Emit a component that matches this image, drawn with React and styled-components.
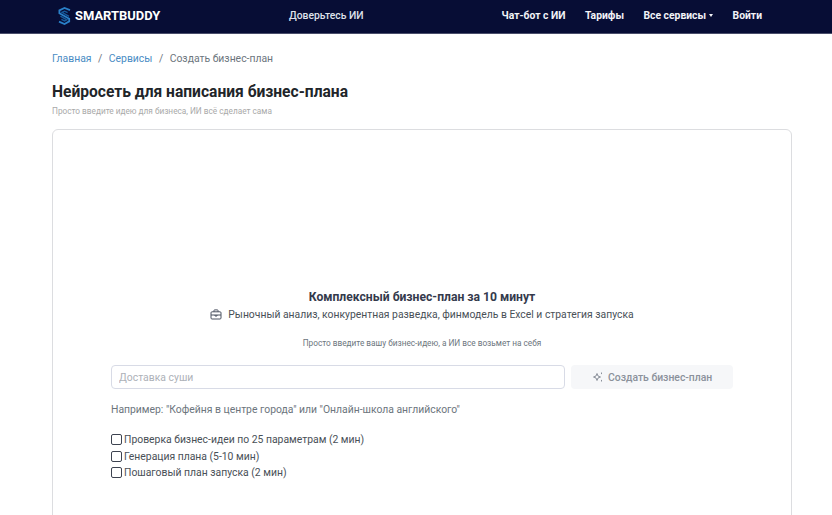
import React from "react";
import styled, { createGlobalStyle } from "styled-components";

const Global = createGlobalStyle`
  html, body {
    margin: 0;
    padding: 0;
    height: 515px;
    overflow: hidden;
    background: #fff;
    font-family: Roboto, "Liberation Sans", sans-serif;
  }
  * { box-sizing: border-box; }
`;

const Nav = styled.nav`
  height: 34px;
  background: #070d35;
  border-bottom: 1px solid #4a4e6b;
  display: flex;
  align-items: center;
  padding: 0 70px 2px 57px;
`;

const Brand = styled.div`
  display: flex;
  align-items: center;
  gap: 3px;
  width: 232px;
  color: #fff;
  font-size: 12.95px;
  font-weight: 700;
`;

const Slogan = styled.div`
  color: #dfe1ea;
  font-size: 10.35px;
  font-weight: 500;
`;

const Menu = styled.div`
  margin-left: auto;
  display: flex;
  align-items: center;
  gap: 19.5px;
`;

const MenuLink = styled.a`
  color: #f2f3f7;
  font-size: 10.35px;
  font-weight: 700;
  display: flex;
  align-items: center;
  gap: 3px;
`;

const Caret = styled.span`
  width: 0;
  height: 0;
  border-left: 2.5px solid transparent;
  border-right: 2.5px solid transparent;
  border-top: 3px solid #f2f3f7;
`;

const Main = styled.main`
  padding: 18px 40px 0 52px;
`;

const Crumbs = styled.div`
  display: flex;
  gap: 6.5px;
  font-size: 10.4px;
  line-height: 14px;
  color: #6c757d;
`;

const Crumb = styled.a`
  color: ${(p) => (p.$active ? "#6c757d" : "#4a8cc4")};
`;

const Title = styled.h1`
  margin: 16px 0 0;
  font-size: 15.6px;
  line-height: 20px;
  font-weight: 700;
  color: #212529;
`;

const Sub = styled.p`
  margin: 4px 0 0;
  font-size: 8.25px;
  line-height: 11px;
  color: #a9a9a9;
`;

const Card = styled.section`
  margin-top: 12px;
  height: 420px;
  border: 1px solid #dcdde0;
  border-radius: 6px;
  padding: 160px 58px 0;
`;

const CardTitle = styled.h2`
  margin: 0;
  text-align: center;
  font-size: 12.15px;
  line-height: 15px;
  font-weight: 700;
  color: #343a4c;
`;

const Lead = styled.div`
  margin-top: 2px;
  display: flex;
  justify-content: center;
  align-items: center;
  gap: 6px;
  font-size: 10.37px;
  line-height: 15px;
  color: #495057;
`;

const Hint = styled.p`
  margin: 16px 0 0;
  text-align: center;
  font-size: 8.25px;
  line-height: 11px;
  color: #6c757d;
`;

const Form = styled.div`
  margin-top: 16px;
  display: flex;
  gap: 6px;
`;

const Input = styled.input`
  width: 455px;
  height: 24px;
  padding: 0 7px;
  border: 1px solid #d8dbe6;
  border-radius: 4px;
  font: 10.4px Roboto, sans-serif;
  &::placeholder { color: #adb1b8; }
`;

const Submit = styled.button`
  width: 162px;
  height: 24px;
  border: 0;
  border-radius: 4px;
  background: #f6f7f9;
  color: #8b919b;
  font: 500 10.4px Roboto, sans-serif;
  display: flex;
  align-items: center;
  justify-content: center;
  gap: 4px;
`;

const Example = styled.p`
  margin: 14px 0 0;
  font-size: 10.38px;
  line-height: 14px;
  color: #6c757d;
`;

const Options = styled.div`
  margin-top: 16px;
  display: flex;
  flex-direction: column;
  gap: 3.5px;
`;

const Option = styled.label`
  display: flex;
  align-items: center;
  gap: 2px;
  font-size: 10.38px;
  line-height: 13px;
  color: #495057;
`;

const Box = styled.span`
  width: 11px;
  height: 11px;
  border: 1px solid #3d4350;
  border-radius: 2px;
  flex: none;
`;

const Logo = () => (
  <svg width="15" height="18" viewBox="0 0 15 18" fill="none">
    <path d="M13 3.2 7.5 1 2.4 3.4v2.8l9.8 5.6v2.6L7.5 17 2 14.6" stroke="#2a80c8" strokeWidth="1.8" />
    <path d="M10.6 5.6 7.6 4.2 5 5.4l7 4" stroke="#16599a" strokeWidth="1.4" />
    <path d="M4.4 12.4l3.2 1.5 2.2-1.1-6.4-3.6" stroke="#16599a" strokeWidth="1.4" />
  </svg>
);

const CaseIcon = () => (
  <svg width="12" height="11" viewBox="0 0 12 11" fill="none" stroke="#4a5260" strokeWidth="1">
    <rect x="1" y="2.8" width="10" height="7.2" rx="1" />
    <path d="M4 2.8V1.4c0-.3.2-.5.5-.5h3c.3 0 .5.2.5.5v1.4" />
    <path d="M1 6h10" />
    <path d="M5 6v1h2V6" />
  </svg>
);

const StarIcon = () => (
  <svg width="12" height="12" viewBox="0 0 12 12" fill="none" stroke="#8b919b" strokeWidth="1">
    <path d="M5 2.5 6 5l2.5 1L6 7 5 9.5 4 7 1.5 6 4 5z" />
    <path d="M9.5 1.5v1.6M9.5 8.9v1.6" />
  </svg>
);

const options = [
  "Проверка бизнес-идеи по 25 параметрам (2 мин)",
  "Генерация плана (5-10 мин)",
  "Пошаговый план запуска (2 мин)",
];

export default function App() {
  return (
    <>
      <Global />
      <Nav>
        <Brand>
          <Logo />
          SMARTBUDDY
        </Brand>
        <Slogan>Доверьтесь ИИ</Slogan>
        <Menu>
          <MenuLink>Чат-бот с ИИ</MenuLink>
          <MenuLink>Тарифы</MenuLink>
          <MenuLink>
            Все сервисы <Caret />
          </MenuLink>
          <MenuLink>Войти</MenuLink>
        </Menu>
      </Nav>
      <Main>
        <Crumbs>
          <Crumb>Главная</Crumb>
          <span>/</span>
          <Crumb>Сервисы</Crumb>
          <span>/</span>
          <Crumb $active>Создать бизнес-план</Crumb>
        </Crumbs>
        <Title>Нейросеть для написания бизнес-плана</Title>
        <Sub>Просто введите идею для бизнеса, ИИ всё сделает сама</Sub>
        <Card>
          <CardTitle>Комплексный бизнес-план за 10 минут</CardTitle>
          <Lead>
            <CaseIcon />
            Рыночный анализ, конкурентная разведка, финмодель в Excel и стратегия запуска
          </Lead>
          <Hint>Просто введите вашу бизнес-идею, а ИИ все возьмет на себя</Hint>
          <Form>
            <Input placeholder="Доставка суши" />
            <Submit>
              <StarIcon />
              Создать бизнес-план
            </Submit>
          </Form>
          <Example>Например: "Кофейня в центре города" или "Онлайн-школа английского"</Example>
          <Options>
            {options.map((o) => (
              <Option key={o}>
                <Box />
                {o}
              </Option>
            ))}
          </Options>
        </Card>
      </Main>
    </>
  );
}
